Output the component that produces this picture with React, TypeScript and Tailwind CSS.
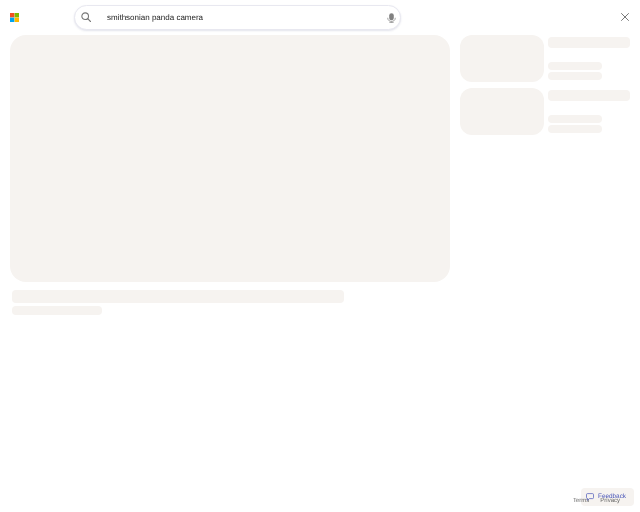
import { X } from "lucide-react";

const sans = "font-['Liberation_Sans',Arial,sans-serif]";

function SideCard() {
  return (
    <div className="flex h-[47px] gap-1">
      <div className="h-[47px] w-[84px] shrink-0 rounded-xl bg-[#f6f3f0]" />
      <div className="flex w-[82px] flex-col pt-[2px]">
        <div className="h-[11px] w-[82px] rounded-[4px] bg-[#f6f3f0]" />
        <div className="mt-[14px] h-2 w-[54px] rounded-[4px] bg-[#f6f3f0]" />
        <div className="mt-[2px] h-2 w-[54px] rounded-[4px] bg-[#f6f3f0]" />
      </div>
    </div>
  );
}

export default function App() {
  return (
    <div className={`relative h-[512px] w-[640px] overflow-hidden bg-white [text-rendering:geometricPrecision] ${sans}`}>
      <header className="flex h-[35px] items-start">
        <svg className="ml-[10px] mt-[13px] shrink-0" width="9" height="9" viewBox="0 0 9 9">
          <rect x="0" y="0" width="4.4" height="4.4" fill="#f25022" />
          <rect x="4.6" y="0" width="4.4" height="4.4" fill="#7fba00" />
          <rect x="0" y="4.6" width="4.4" height="4.4" fill="#00a4ef" />
          <rect x="4.6" y="4.6" width="4.4" height="4.4" fill="#ffb900" />
        </svg>
        <div className="ml-[55px] mt-[5px] flex h-[25px] w-[327px] items-center rounded-[13px] border border-[#e8e8f0] bg-white pl-[6px] pr-[4px] shadow-[0_1px_2px_rgba(60,64,120,0.14)]">
          <svg width="10" height="10" viewBox="0 0 12 12" fill="none" stroke="#777" strokeWidth="1.3" className="mb-[2px] shrink-0">
            <circle cx="5" cy="5" r="4" />
            <path d="M8 8 11.4 11.4" strokeLinecap="round" />
          </svg>
          <span className="ml-[16px] flex-1 text-[8px] leading-none text-[#222] [will-change:transform]">smithsonian panda camera</span>
          <svg width="9" height="10" viewBox="0 0 9 10" className="shrink-0">
            <rect x="2.2" y="0.3" width="4.6" height="7" rx="2.3" fill="#808080" />
            <path d="M0.7 4.8c0 2.4 1.6 3.6 3.8 3.6s3.8-1.2 3.8-3.6M4.5 8.4v1.2M2.4 9.6h4.2" fill="none" stroke="#999" strokeWidth="0.9" />
          </svg>
        </div>
        <X className="ml-[217px] mt-[10px] shrink-0 text-[#666]" size={14} strokeWidth={1.5} />
      </header>
      <main className="flex gap-[10px] pl-[10px]">
        <section className="w-[440px]">
          <div className="h-[247px] w-[440px] rounded-2xl bg-[#f6f3f0]" />
          <div className="ml-[2px] mt-2 h-[13px] w-[332px] rounded-[4px] bg-[#f6f3f0]" />
          <div className="ml-[2px] mt-[3px] h-[9px] w-[90px] rounded-[4px] bg-[#f6f3f0]" />
        </section>
        <aside className="flex flex-col gap-[6px]">
          <SideCard />
          <SideCard />
        </aside>
      </main>
      <div className="absolute left-[581px] top-[488px] h-[18px] w-[53px] rounded-[4px] bg-[#f6f3f0]" />
      <div className="absolute left-[573px] top-[498px] flex gap-[11px] text-[6px] leading-[6px] text-[#666] [will-change:transform]">
        <span>Terms</span>
        <span>Privacy</span>
      </div>
      <div className="absolute left-[586px] top-[488px] flex h-[18px] items-center text-[6.4px] text-[#4a56b8] [will-change:transform]">
        <svg width="8" height="8" viewBox="0 0 8 8" fill="none" stroke="#4a56b8" strokeWidth="0.7" className="shrink-0">
          <path d="M1.5.6h5a1 1 0 0 1 1 1v3a1 1 0 0 1-1 1H3.4L1.6 7.3V5.6h-.1a1 1 0 0 1-1-1v-3a1 1 0 0 1 1-1Z" />
        </svg>
        <span className="ml-1 leading-none">Feedback</span>
      </div>
    </div>
  );
}
